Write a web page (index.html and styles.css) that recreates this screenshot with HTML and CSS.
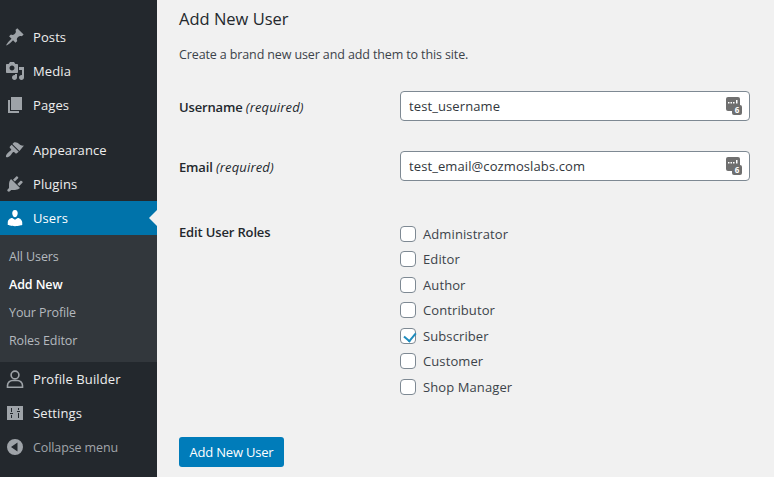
FILE: index.html
```html
<!DOCTYPE html>
<html lang="en">
<head>
    <meta charset="UTF-8">
    <meta name="viewport" content="width=device-width, initial-scale=1.0">
    <title>Add New User</title>
    <link rel="stylesheet" href="styles.css">
</head>
<body>
    <div class="layout">
        <nav class="sidebar">
            <ul class="menu">
                <li class="item">
                    <svg class="icon" viewBox="0 0 20 20"><path d="M10.44 3.02l1.82-1.82 6.36 6.35-1.83 1.82c-1.05-.68-2.48-.57-3.41.36l-.75.75c-.92.93-1.04 2.35-.35 3.41l-1.83 1.82-2.41-2.41-2.8 2.79c-.42.42-3.38 2.71-3.8 2.29s1.86-3.39 2.28-3.81l2.79-2.79L4.1 9.36l1.83-1.82c1.05.69 2.48.57 3.41-.36l.75-.75c.93-.92 1.04-2.35.35-3.41z"/></svg>
                    Posts
                </li>
                <li class="item">
                    <svg class="icon" viewBox="0 0 20 20"><path d="M13 11V4c0-.55-.45-1-1-1h-1.67L9 1H5L3.67 3H2c-.55 0-1 .45-1 1v7c0 .55.45 1 1 1h10c.55 0 1-.45 1-1zM7 4.5c1.38 0 2.5 1.12 2.5 2.5S8.38 9.5 7 9.5 4.5 8.38 4.5 7 5.62 4.5 7 4.5zM14 6h5v10.5c0 1.38-1.12 2.5-2.5 2.5S14 17.88 14 16.5s1.12-2.5 2.5-2.5c.17 0 .34.02.5.05V9h-3V6zm-4 8.05V13h2v3.5c0 1.38-1.12 2.5-2.5 2.5S7 17.88 7 16.5 8.12 14 9.5 14c.17 0 .34.02.5.05z" fill-rule="evenodd"/></svg>
                    Media
                </li>
                <li class="item">
                    <svg class="icon" viewBox="0 0 20 20"><path d="M6 15V2h11v13H6zm-1 1h9v2H3V5h2v11z"/></svg>
                    Pages
                </li>
                <li class="item gap-top">
                    <svg class="icon" viewBox="0 0 20 20"><path d="M14.48 11.06L7.41 3.99l1.5-1.5c.5-.56 2.3-.47 3.51.32 1.21.8 1.43 1.28 2.91 2.1 1.18.64 2.45.83 3.67.7zm-.71.71L6.7 4.7 4.93 6.47c-.39.39-.39 1.02 0 1.41l1.06 1.06c.39.39.39 1.03 0 1.42-.6.6-1.43 1.11-2.21 1.69-.35.26-.7.53-1.01.84-1.35 1.34-2.38 3.4-1.59 4.19.79.79 2.85-.24 4.19-1.59.31-.31.58-.66.84-1.01.58-.78 1.09-1.61 1.69-2.21.39-.39 1.02-.39 1.41 0l1.06 1.06c.39.39 1.02.39 1.41 0z"/></svg>
                    Appearance
                </li>
                <li class="item">
                    <svg class="icon" viewBox="0 0 20 20"><path d="M13.11 4.36L9.87 7.6 8 5.73l3.24-3.24c.35-.34 1.05-.2 1.56.32.52.51.66 1.21.31 1.55zm-8 1.77l.91-1.12 9.01 9.01-1.19.84c-.71.71-2.63 1.16-3.82 1.16H6.14L4.9 17.26c-.59.59-1.54.59-2.12 0-.59-.58-.59-1.53 0-2.12l1.24-1.24v-3.88c0-1.13.4-3.19 1.09-3.89zm7.26 3.97l3.24-3.24c.34-.35 1.04-.21 1.55.31.52.51.66 1.21.31 1.55l-3.24 3.25z"/></svg>
                    Plugins
                </li>
                <li class="item current">
                    <svg class="icon" viewBox="0 0 20 20"><path d="M10 9.25c-2.27 0-2.73-3.44-2.73-3.44C7 4.02 7.82 2 9.97 2c2.16 0 2.98 2.02 2.71 3.81 0 0-.41 3.44-2.68 3.44zm0 2.57L12.72 10c2.39 0 4.52 2.33 4.52 4.53v2.49s-3.65 1.13-7.24 1.13c-3.65 0-7.24-1.13-7.24-1.13v-2.49c0-2.25 1.94-4.48 4.47-4.48z"/></svg>
                    Users
                </li>
            </ul>
            <ul class="submenu">
                <li>All Users</li>
                <li class="active">Add New</li>
                <li>Your Profile</li>
                <li>Roles Editor</li>
            </ul>
            <ul class="menu">
                <li class="item">
                    <svg class="icon" viewBox="0 0 20 20"><circle class="outline" cx="10" cy="6" r="3.9"/><path class="outline" d="M2.5 18.2v-1.7c0-3 2.5-5 5-5h5c2.5 0 5 2 5 5v1.700z"/></svg>
                    Profile Builder
                </li>
                <li class="item">
                    <svg class="icon" viewBox="0 0 20 20"><path d="M2 3h16v14H2z"/><path class="marks" d="M6.500 5v4M5 10.500h3M6.500 12v3M13.500 5v2M12 8.500h3M13.500 10v5"/></svg>
                    Settings
                </li>
                <li class="item collapse">
                    <svg class="icon" viewBox="0 0 20 20"><path d="M10 2a8 8 0 1 0 0 16 8 8 0 0 0 0-16zm2.500 3.500v9L6 10z" fill-rule="evenodd"/></svg>
                    Collapse menu
                </li>
            </ul>
        </nav>

        <main class="content">
            <h1 class="title">Add New User</h1>
            <p class="intro">Create a brand new user and add them to this site.</p>

            <form class="form">
                <div class="row">
                    <label class="label" for="username">Username <em>(required)</em></label>
                    <div class="field">
                        <input type="text" id="username" class="text-input" value="test_username">
                        <svg class="key-icon" viewBox="0 0 16 18"><rect x="0" y="0" width="14" height="14" rx="2"/><rect class="key-dots" x="2" y="5" width="1.500" height="1.500"/><rect class="key-dots" x="4.500" y="5" width="1.500" height="1.500"/><rect class="key-dots" x="7" y="5" width="1.500" height="1.500"/><rect class="key-dots" x="10" y="3" width="1.500" height="3.500"/><rect x="6" y="8" width="10" height="10" rx="2"/><text class="key-num" x="11" y="16.200">6</text></svg>
                    </div>
                </div>
                <div class="row">
                    <label class="label" for="email">Email <em>(required)</em></label>
                    <div class="field">
                        <input type="text" id="email" class="text-input" value="test_email@cozmoslabs.com">
                        <svg class="key-icon" viewBox="0 0 16 18"><rect x="0" y="0" width="14" height="14" rx="2"/><rect class="key-dots" x="2" y="5" width="1.500" height="1.500"/><rect class="key-dots" x="4.500" y="5" width="1.500" height="1.500"/><rect class="key-dots" x="7" y="5" width="1.500" height="1.500"/><rect class="key-dots" x="10" y="3" width="1.500" height="3.500"/><rect x="6" y="8" width="10" height="10" rx="2"/><text class="key-num" x="11" y="16.200">6</text></svg>
                    </div>
                </div>
                <div class="row roles">
                    <div class="label">Edit User Roles</div>
                    <div class="role-list">
                        <label class="role"><input type="checkbox" class="check">Administrator</label>
                        <label class="role"><input type="checkbox" class="check">Editor</label>
                        <label class="role"><input type="checkbox" class="check">Author</label>
                        <label class="role"><input type="checkbox" class="check">Contributor</label>
                        <label class="role"><input type="checkbox" class="check" checked>Subscriber</label>
                        <label class="role"><input type="checkbox" class="check">Customer</label>
                        <label class="role"><input type="checkbox" class="check">Shop Manager</label>
                    </div>
                </div>
                <button type="button" class="submit">Add New User</button>
            </form>
        </main>
    </div>
</body>
</html>
```

FILE: styles.css
```css
* {
    box-sizing: border-box;
}
html, body {
    height: 100%;
}
body {
    margin: 0;
    overflow: hidden;
    background-color: #f1f1f1;
    color: #3c434a;
    font-family: "Open Sans", "Liberation Sans", sans-serif;
    font-size: 13px;
}
ul {
    list-style: none;
    margin: 0;
    padding: 0;
}
.layout {
    display: flex;
    height: 477px;
}

/* left menu */
.sidebar {
    flex: 0 0 157px;
    padding-top: 20px;
    background-color: #23282d;
}
.item {
    position: relative;
    display: flex;
    align-items: center;
    gap: 8px;
    height: 34px;
    padding-left: 5px;
    color: #eeeeee;
    letter-spacing: 0.1px;
}
.gap-top {
    margin-top: 11px;
}
.icon {
    flex: none;
    width: 20px;
    height: 20px;
    fill: #9ea3a8;
}
.outline {
    fill: none;
    stroke: #9ea3a8;
    stroke-width: 1.6;
}
.marks {
    fill: none;
    stroke: #23282d;
    stroke-width: 1;
}
.current {
    background-color: #0073aa;
    color: #ffffff;
}
.current .icon {
    fill: #ffffff;
}
.current::after {
    content: "";
    position: absolute;
    right: 0;
    top: 9px;
    border: 8px solid transparent;
    border-left-width: 0;
    border-right-color: #f1f1f1;
}
.collapse {
    color: #a0a5aa;
    font-size: 12.5px;
    letter-spacing: -0.1px;
}
.submenu {
    padding: 8px 0 7px;
    background-color: #32373c;
    color: #b4b9be;
    font-size: 12.5px;
    letter-spacing: -0.1px;
}
.submenu li {
    height: 28px;
    padding-left: 9px;
    line-height: 28px;
}
.submenu .active {
    color: #ffffff;
    font-weight: 600;
}

/* main column */
.content {
    flex: 1;
    padding-left: 22px;
}
.title {
    margin: 8px 0 0;
    color: #23282d;
    font-size: 16.5px;
    font-weight: 500;
    line-height: 22px;
}
.intro {
    margin: 15px 0 0;
    font-size: 12.5px;
    letter-spacing: -0.12px;
    line-height: 20px;
}
.form {
    margin-top: 26px;
}
.row {
    display: flex;
    align-items: center;
    height: 30px;
    margin-bottom: 30px;
}
.label {
    flex: 0 0 221px;
    padding-top: 2px;
    font-weight: 600;
    color: #23282d;
    letter-spacing: -0.15px;
}
.label em {
    font-weight: 400;
    letter-spacing: 0.15px;
}
.field {
    position: relative;
    width: 350px;
}
.text-input {
    display: block;
    width: 100%;
    height: 30px;
    padding: 0 8px;
    border: 1px solid #7e8993;
    border-radius: 4px;
    background-color: #ffffff;
    color: #32373c;
    font: inherit;
    letter-spacing: 0.1px;
}
.key-icon {
    position: absolute;
    right: 8px;
    top: 6px;
    width: 16px;
    height: 18px;
    fill: #6f6f6f;
}
.key-dots {
    fill: #ffffff;
}
.key-num {
    fill: #ffffff;
    font-size: 8px;
    font-weight: 700;
    text-anchor: middle;
}
.roles {
    align-items: flex-start;
    height: auto;
    margin: 42px 0 0;
}
.roles .label {
    padding-top: 0;
}
.role-list {
    display: flex;
    flex-direction: column;
    margin-top: -2px;
}
.role {
    display: flex;
    align-items: center;
    gap: 7px;
    height: 25.5px;
    letter-spacing: 0.1px;
}
.check {
    appearance: none;
    position: relative;
    width: 16px;
    height: 16px;
    margin: 0;
    border: 1px solid #7e8993;
    border-radius: 4px;
    background-color: #ffffff;
}
.check:checked::before {
    content: "";
    position: absolute;
    left: 4.5px;
    top: 1px;
    width: 5.5px;
    height: 9px;
    border: solid #1e8cbe;
    border-width: 0 2.5px 2.5px 0;
    transform: rotate(40deg);
}
.submit {
    display: block;
    width: 105px;
    height: 30px;
    margin-top: 37px;
    padding: 0;
    border: 0;
    border-radius: 3px;
    background-color: #007cba;
    color: #ffffff;
    font: inherit;
    letter-spacing: -0.2px;
}
```
